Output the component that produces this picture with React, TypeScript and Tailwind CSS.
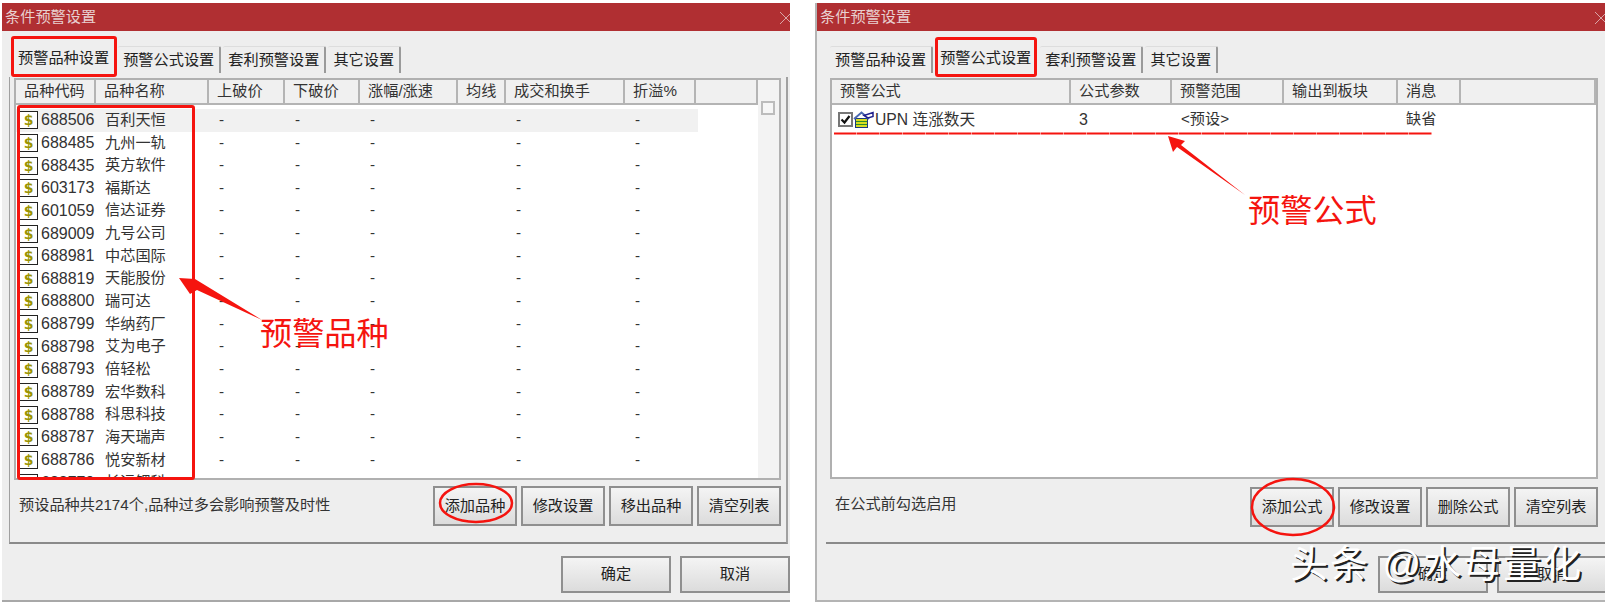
const FONT = "font-['Liberation_Sans','Noto_Sans_CJK_SC',sans-serif]";

const stocks = [
  ["688506", "百利天恒"], ["688485", "九州一轨"], ["688435", "英方软件"], ["603173", "福斯达"],
  ["601059", "信达证券"], ["689009", "九号公司"], ["688981", "中芯国际"], ["688819", "天能股份"],
  ["688800", "瑞可达"], ["688799", "华纳药厂"], ["688798", "艾为电子"], ["688793", "倍轻松"],
  ["688789", "宏华数科"], ["688788", "科思科技"], ["688787", "海天瑞声"], ["688786", "悦安新材"],
  ["688779", "长远锂科"],
];

function TitleBar() {
  return (
    <div className="flex h-[28px] shrink-0 items-center justify-between overflow-hidden bg-[#b02f32] pl-[3px] pt-[1px] text-[15.2px] text-[#e8d0d0]">
      <span>条件预警设置</span>
      <svg width="10" height="14" viewBox="0 0 10 14" className="shrink-0">
        <path d="M0 1l12 12M12 1L0 13" stroke="#d9a5a6" strokeWidth="1" fill="none" />
      </svg>
    </div>
  );
}

function Tabs({ active }: { active: number }) {
  const names = ["预警品种设置", "预警公式设置", "套利预警设置", "其它设置"];
  return (
    <div className="flex h-[33px] items-end gap-[2px] pl-[4px] text-[15.2px] text-[#222]">
      {names.map((n, i) => (
        <div
          key={n}
          className={
            i === active
              ? "mr-[2px] flex h-[33px] items-center rounded-t-[2px] bg-[#eeeeee] px-[5px] pb-[4px]"
              : "mb-[4px] flex h-[27px] items-center rounded-t-[2px] border-r-2 border-t border-r-[#9a9a9a] border-t-[#dddddd] bg-[#eeeeee] px-[5px]"
          }
        >
          {n}
        </div>
      ))}
    </div>
  );
}

function HeaderCell({ w, children, grow }: { w?: string; children?: React.ReactNode; grow?: boolean }) {
  return (
    <div
      className={`flex h-[25px] shrink-0 items-center border-b-2 border-r-2 border-[#b4b4b4] bg-[#f0f0f0] pl-[8px] text-[15.2px] text-[#333] ${grow ? "grow" : ""} ${w ?? ""}`}
    >
      {children}
    </div>
  );
}

function Btn({ w = "w-[84px]", h = "h-[40px]", children }: { w?: string; h?: string; children: React.ReactNode }) {
  return (
    <div
      className={`flex ${w} ${h} shrink-0 items-center justify-center border-2 border-[#8f8f8f] bg-gradient-to-b from-[#f4f4f4] to-[#dcdcdc] text-[15.2px] text-[#222]`}
    >
      {children}
    </div>
  );
}

function DollarIcon() {
  return (
    <div className="flex h-[18px] w-[18px] shrink-0 items-center justify-center border-y border-r border-[#222] bg-white font-['DejaVu_Sans',sans-serif] text-[14px] font-bold leading-none text-[#9a9400]">
      $
    </div>
  );
}

function Row({ i, code, name }: { i: number; code: string; name: string }) {
  const cells: [string, string][] = [
    ["w-[113px]", name], ["w-[76px]", "-"], ["w-[75px]", "-"], ["w-[98px]", "-"],
    ["w-[48px]", ""], ["w-[119px]", "-"], ["w-[71px]", "-"],
  ];
  return (
    <div className={`flex h-[22.65px] w-[682px] shrink-0 items-center text-[15.2px] text-[#333] ${i === 0 ? "bg-[#f1f1f1]" : ""}`}>
      <div className="flex w-[80px] shrink-0 items-center gap-[3px] pl-[4px]">
        <DollarIcon />
        <span className="text-[16px]">{code}</span>
      </div>
      {cells.map(([w, t], k) => (
        <div key={k} className={`${w} shrink-0 ${k === 0 ? "pl-[9px]" : "pl-[10px]"}`}>{t}</div>
      ))}
    </div>
  );
}

function LeftDialog() {
  return (
    <div className="flex h-[599px] w-[788px] shrink-0 flex-col border-b-2 border-[#a8a8a8] bg-[#eeeeee]">
      <TitleBar />
      <div className="flex grow flex-col pl-[7px]">
        <div className="mt-[13px]"><Tabs active={0} /></div>
        <div className="mr-[2px] flex h-[467px] flex-col border-b-2 border-l border-r-2 border-[#a0a0a0] border-b-[#8a8a8a] pb-0 pl-[4px] pr-[5px] pt-[1px]">
          <div className="flex h-[402px] overflow-hidden border-2 border-[#b0b0b0] bg-white">
            <div className="flex min-w-0 grow flex-col">
              <div className="flex shrink-0">
                <HeaderCell w="w-[80px]">品种代码</HeaderCell>
                <HeaderCell w="w-[113px]">品种名称</HeaderCell>
                <HeaderCell w="w-[76px]">上破价</HeaderCell>
                <HeaderCell w="w-[75px]">下破价</HeaderCell>
                <HeaderCell w="w-[98px]">涨幅/涨速</HeaderCell>
                <HeaderCell w="w-[48px]">均线</HeaderCell>
                <HeaderCell w="w-[119px]">成交和换手</HeaderCell>
                <HeaderCell w="w-[71px]">折溢%</HeaderCell>
                <HeaderCell grow />
              </div>
              <div className="min-h-0 grow overflow-hidden pt-[4px]">
                {stocks.map(([c, n], i) => <Row key={c} i={i} code={c} name={n} />)}
              </div>
            </div>
            <div className="w-[21px] shrink-0 bg-[#f3f3f3] pl-[3px] pt-[21px]">
              <div className="h-[14px] w-[14px] border-2 border-[#bcbcbc] bg-[#f6f6f6]" />
            </div>
          </div>
          <div className="flex grow items-start justify-between pl-[5px] pt-[6px]">
            <span className="mt-[8px] text-[15.2px] text-[#333]">预设品种共2174个,品种过多会影响预警及时性</span>
            <div className="flex gap-[4px]">
              <Btn>添加品种</Btn><Btn>修改设置</Btn><Btn>移出品种</Btn><Btn>清空列表</Btn>
            </div>
          </div>
        </div>
        <div className="flex justify-end gap-[9px] pt-[12px]">
          <Btn w="w-[110px]" h="h-[37px]">确定</Btn>
          <Btn w="w-[110px]" h="h-[37px]">取消</Btn>
        </div>
      </div>
    </div>
  );
}

function FormulaIcon() {
  return (
    <svg width="22" height="18" viewBox="0 0 22 18" className="shrink-0">
      <rect x="2.500" y="7.500" width="12" height="9" fill="#d6dc20" stroke="#1c3a80" />
      <path d="M3 10.500h11M3 13.500h11" stroke="#2c8a2c" strokeWidth="1" />
      <path d="M1 8l7.500-6.500L16 8" fill="none" stroke="#4a68b0" strokeWidth="2" />
      <path d="M11 4.500l9-3v4l-5 1.500z" fill="#fff" stroke="#20208c" strokeWidth="1.500" />
    </svg>
  );
}

function RightDialog() {
  return (
    <div className="flex h-[599px] w-[790px] shrink-0 flex-col border-b-2 border-l-2 border-[#b4b4b4] bg-[#eeeeee]">
      <TitleBar />
      <div className="flex grow flex-col pl-[9px]">
        <div className="mt-[13px]"><Tabs active={1} /></div>
        <div className="flex h-[467px] flex-col border-b-2 border-[#8a8a8a] pl-[4px] pr-[7px] pt-[1px]">
          <div className="flex h-[401px] flex-col overflow-hidden border-2 border-[#b0b0b0] bg-white">
            <div className="flex shrink-0">
              <HeaderCell w="w-[239px]">预警公式</HeaderCell>
              <HeaderCell w="w-[101px]">公式参数</HeaderCell>
              <HeaderCell w="w-[112px]">预警范围</HeaderCell>
              <HeaderCell w="w-[114px]">输出到板块</HeaderCell>
              <HeaderCell w="w-[63px]">消息</HeaderCell>
              <HeaderCell grow />
            </div>
            <div className="flex h-[26px] shrink-0 items-center pt-[3px] text-[15.2px] text-[#333]">
              <div className="flex w-[239px] shrink-0 items-center pl-[6px]">
                <div className="flex h-[15px] w-[15px] shrink-0 items-center justify-center border-2 border-[#777] bg-white">
                  <svg width="11" height="11" viewBox="0 0 11 11"><path d="M1.500 5.500l3 3 5-6.500" stroke="#111" strokeWidth="2.200" fill="none" /></svg>
                </div>
                <FormulaIcon />
                <span className="text-[15.7px]">UPN 连涨数天</span>
              </div>
              <div className="w-[101px] shrink-0 pl-[8px] text-[16px]">3</div>
              <div className="w-[112px] shrink-0 pl-[9px]">&lt;预设&gt;</div>
              <div className="w-[114px] shrink-0" />
              <div className="w-[63px] shrink-0 pl-[8px]">缺省</div>
            </div>
          </div>
          <div className="flex grow items-start justify-between pl-[5px] pt-[8px]">
            <span className="mt-[6px] text-[15.2px] text-[#333]">在公式前勾选启用</span>
            <div className="flex gap-[4px]">
              <Btn>添加公式</Btn><Btn>修改设置</Btn><Btn>删除公式</Btn><Btn>清空列表</Btn>
            </div>
          </div>
        </div>
        <div className="mr-[-2px] flex justify-end gap-[9px] pt-[12px]">
          <Btn w="w-[110px]" h="h-[37px]">确定</Btn>
          <Btn w="w-[110px]" h="h-[37px]">取消</Btn>
        </div>
      </div>
    </div>
  );
}

function Annotations() {
  return (
    <>
      <div className="absolute left-[11px] top-[36px] h-[41px] w-[106px] rounded-[3px] border-[3px] border-[#f5140f]" />
      <div className="absolute left-[17px] top-[105px] h-[375px] w-[178px] rounded-[3px] border-[3px] border-[#f5140f]" />
      <div className="absolute left-[935px] top-[37px] h-[40px] w-[102px] rounded-[3px] border-[3px] border-[#f5140f]" />
      <svg width="1605" height="606" className="absolute left-0 top-0" fill="none">
        <ellipse cx="476" cy="503" rx="36" ry="19" stroke="#f5140f" strokeWidth="2.500" />
        <ellipse cx="1293" cy="507" rx="41" ry="28" stroke="#f5140f" strokeWidth="2.500" />
        <path d="M834 133.500H1432" stroke="#f5140f" strokeWidth="2" strokeDasharray="22.500 0.500" />
        <path d="M179 278L195 279L262 320L197 290L190 294Z" fill="#f5140f" />
        <path d="M1168 136L1185 141L1181 145L1245 195L1177 147L1173 152Z" fill="#f5140f" />
      </svg>
      <span className="absolute left-[260px] top-[312px] text-[32.2px] leading-[44px] text-[#f5140f]">预警品种</span>
      <span className="absolute left-[1248px] top-[189px] text-[32.2px] leading-[44px] text-[#f5140f]">预警公式</span>
      <span className="absolute left-[1290px] top-[540px] text-[38px] leading-[48px] tracking-[2px] text-white [text-shadow:2px_2px_0_#222]">头条 @水母量化</span>
    </>
  );
}

export default function App() {
  return (
    <div className={`relative flex h-[606px] w-[1605px] overflow-hidden bg-white pl-[2px] pt-[3px] ${FONT}`}>
      <LeftDialog />
      <div className="w-[25px] shrink-0" />
      <RightDialog />
      <Annotations />
    </div>
  );
}
